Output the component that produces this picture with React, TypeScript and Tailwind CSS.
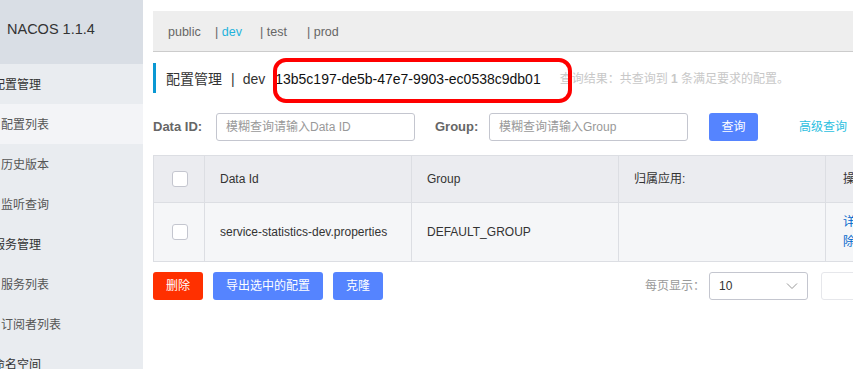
const cn = "font-['Liberation_Sans','Noto_Sans_CJK_SC',sans-serif]";

const menu = [
  { label: "配置管理", head: true },
  { label: "配置列表", active: true },
  { label: "历史版本" },
  { label: "监听查询" },
  { label: "服务管理", head: true },
  { label: "服务列表" },
  { label: "订阅者列表" },
  { label: "命名空间", head: true },
];

function Sidebar() {
  return (
    <div className="w-[143px] shrink-0 bg-[#e9ecf0] overflow-hidden">
      <div className="h-[64px] bg-[#d9dee5] flex items-center pl-[7px] pb-[4px] text-[14.5px] text-[#333]">NACOS 1.1.4</div>
      {menu.map((m) => (
        <div
          key={m.label}
          className={[
            "h-[40px] flex items-center whitespace-nowrap text-[12px] pt-[2px]",
            m.active ? "bg-[#f3f4f7]" : "",
            m.head ? "pl-0 -ml-[7px] text-[#333]" : "pl-[1px] text-[#555]",
          ].join(" ")}
        >
          {m.label}
        </div>
      ))}
    </div>
  );
}

function Checkbox() {
  return <div className="w-[16px] h-[16px] rounded-[3px] border border-[#c4c6cf] bg-white" />;
}

export default function App() {
  return (
    <div className={`w-[853px] h-[369px] overflow-hidden flex bg-white ${cn}`}>
      <Sidebar />
      <div className="flex-1 min-w-0 pl-[10px] pt-[11px]">
        {/* namespace bar */}
        <div className="h-[41px] w-[900px] bg-[#eeeeee] border-b border-[#cccccc] flex items-center pl-[15px] pt-[3px] text-[12.5px] text-[#666]">
          <span className="w-[47px]">public</span>
          <span className="w-[45px]">| <span className="text-[#1fb3dc]">dev</span></span>
          <span className="w-[47px]">| test</span>
          <span>| prod</span>
        </div>

        {/* title */}
        <div className="relative mt-[11px] h-[30px] flex items-center border-l-[3px] border-[#0a98d3] pl-[10px] pt-[2px] whitespace-nowrap">
          <span className="text-[14px] text-[#333]">配置管理</span>
          <span className="text-[14px] text-[#333] ml-[9px]">|</span>
          <span className="text-[14px] text-[#333] ml-[8px]">dev</span>
          <span className="text-[14px] text-[#111] ml-[10px]">13b5c197-de5b-47e7-9903-ec0538c9db01</span>
          <span className="text-[12px] text-[#c8c8c8] ml-[19px]">
            查询结果：共查询到 <b>1</b> 条满足要求的配置。
          </span>
          <div className="absolute left-[117px] top-[-5px] w-[299px] h-[45px] border-[4px] border-[#ff0000] rounded-[13px]" />
        </div>

        {/* filters */}
        <div className="mt-[20px] h-[28px] flex items-center whitespace-nowrap">
          <span className="shrink-0 w-[63px] font-bold text-[13px] text-[#666]">Data ID:</span>
          <div className="shrink-0 w-[199px] h-[28px] rounded-[3px] border border-[#c4c6cf] flex items-center pl-[9px] text-[12px] text-[#999]">
            模糊查询请输入Data ID
          </div>
          <span className="shrink-0 ml-[20px] w-[54px] font-bold text-[13px] text-[#666]">Group:</span>
          <div className="shrink-0 w-[199px] h-[28px] rounded-[3px] border border-[#c4c6cf] flex items-center pl-[9px] text-[12px] text-[#999]">
            模糊查询请输入Group
          </div>
          <button className="shrink-0 ml-[21px] w-[49px] h-[28px] rounded-[3px] bg-[#5584ff] text-white text-[12px]">查询</button>
          <span className="shrink-0 ml-[41px] text-[12px] text-[#2cc0df]">高级查询</span>
        </div>

        {/* table */}
        <div className="mt-[14px] w-[900px] border border-[#dcdee3] text-[12px] text-[#333]">
          <div className="h-[47px] flex bg-[#ebecf0] border-b border-[#dcdee3]">
            <div className="w-[51px] shrink-0 flex items-center justify-center border-r border-[#dcdee3] pl-[1px]"><Checkbox /></div>
            <div className="w-[207px] shrink-0 flex items-center pl-[15px] border-r border-[#dcdee3]">Data Id</div>
            <div className="w-[207px] shrink-0 flex items-center pl-[15px] border-r border-[#dcdee3]">Group</div>
            <div className="w-[207px] shrink-0 flex items-center pl-[15px] border-r border-[#dcdee3]">归属应用:</div>
            <div className="flex-1 flex items-center pl-[17px]">操作</div>
          </div>
          <div className="h-[58px] flex bg-[#f5f6f8]">
            <div className="w-[51px] shrink-0 flex items-center justify-center border-r border-[#dcdee3] pl-[1px]"><Checkbox /></div>
            <div className="w-[207px] shrink-0 flex items-center pl-[15px] border-r border-[#dcdee3]">service-statistics-dev.properties</div>
            <div className="w-[207px] shrink-0 flex items-center pl-[15px] border-r border-[#dcdee3]">DEFAULT_GROUP</div>
            <div className="w-[207px] shrink-0 border-r border-[#dcdee3]" />
            <div className="flex-1 flex flex-col justify-center pl-[17px] text-[#0066cc] leading-[20px]">
              <span>详情</span>
              <span>除</span>
            </div>
          </div>
        </div>

        {/* footer */}
        <div className="mt-[10px] h-[28px] flex items-center whitespace-nowrap text-[12px]">
          <button className="shrink-0 w-[50px] h-[28px] rounded-[3px] bg-[#ff3000] text-white">删除</button>
          <button className="shrink-0 ml-[10px] w-[110px] h-[28px] rounded-[3px] bg-[#5584ff] text-white">导出选中的配置</button>
          <button className="shrink-0 ml-[10px] w-[50px] h-[28px] rounded-[3px] bg-[#5584ff] text-white">克隆</button>
          <span className="shrink-0 ml-[262px] text-[#999]">每页显示：</span>
          <div className="shrink-0 ml-[4px] w-[99px] h-[28px] rounded-[3px] border border-[#c4c6cf] flex items-center justify-between pl-[9px] pr-[9px] text-[#333]">
            <span>10</span>
            <svg width="12" height="8" viewBox="0 0 12 8" fill="none" stroke="#999" strokeWidth="1">
              <path d="M1 1.5 L6 6.5 L11 1.5" />
            </svg>
          </div>
          <div className="shrink-0 ml-[13px] w-[40px] h-[28px] rounded-[3px] border border-[#e6e7eb]" />
        </div>
      </div>
    </div>
  );
}
